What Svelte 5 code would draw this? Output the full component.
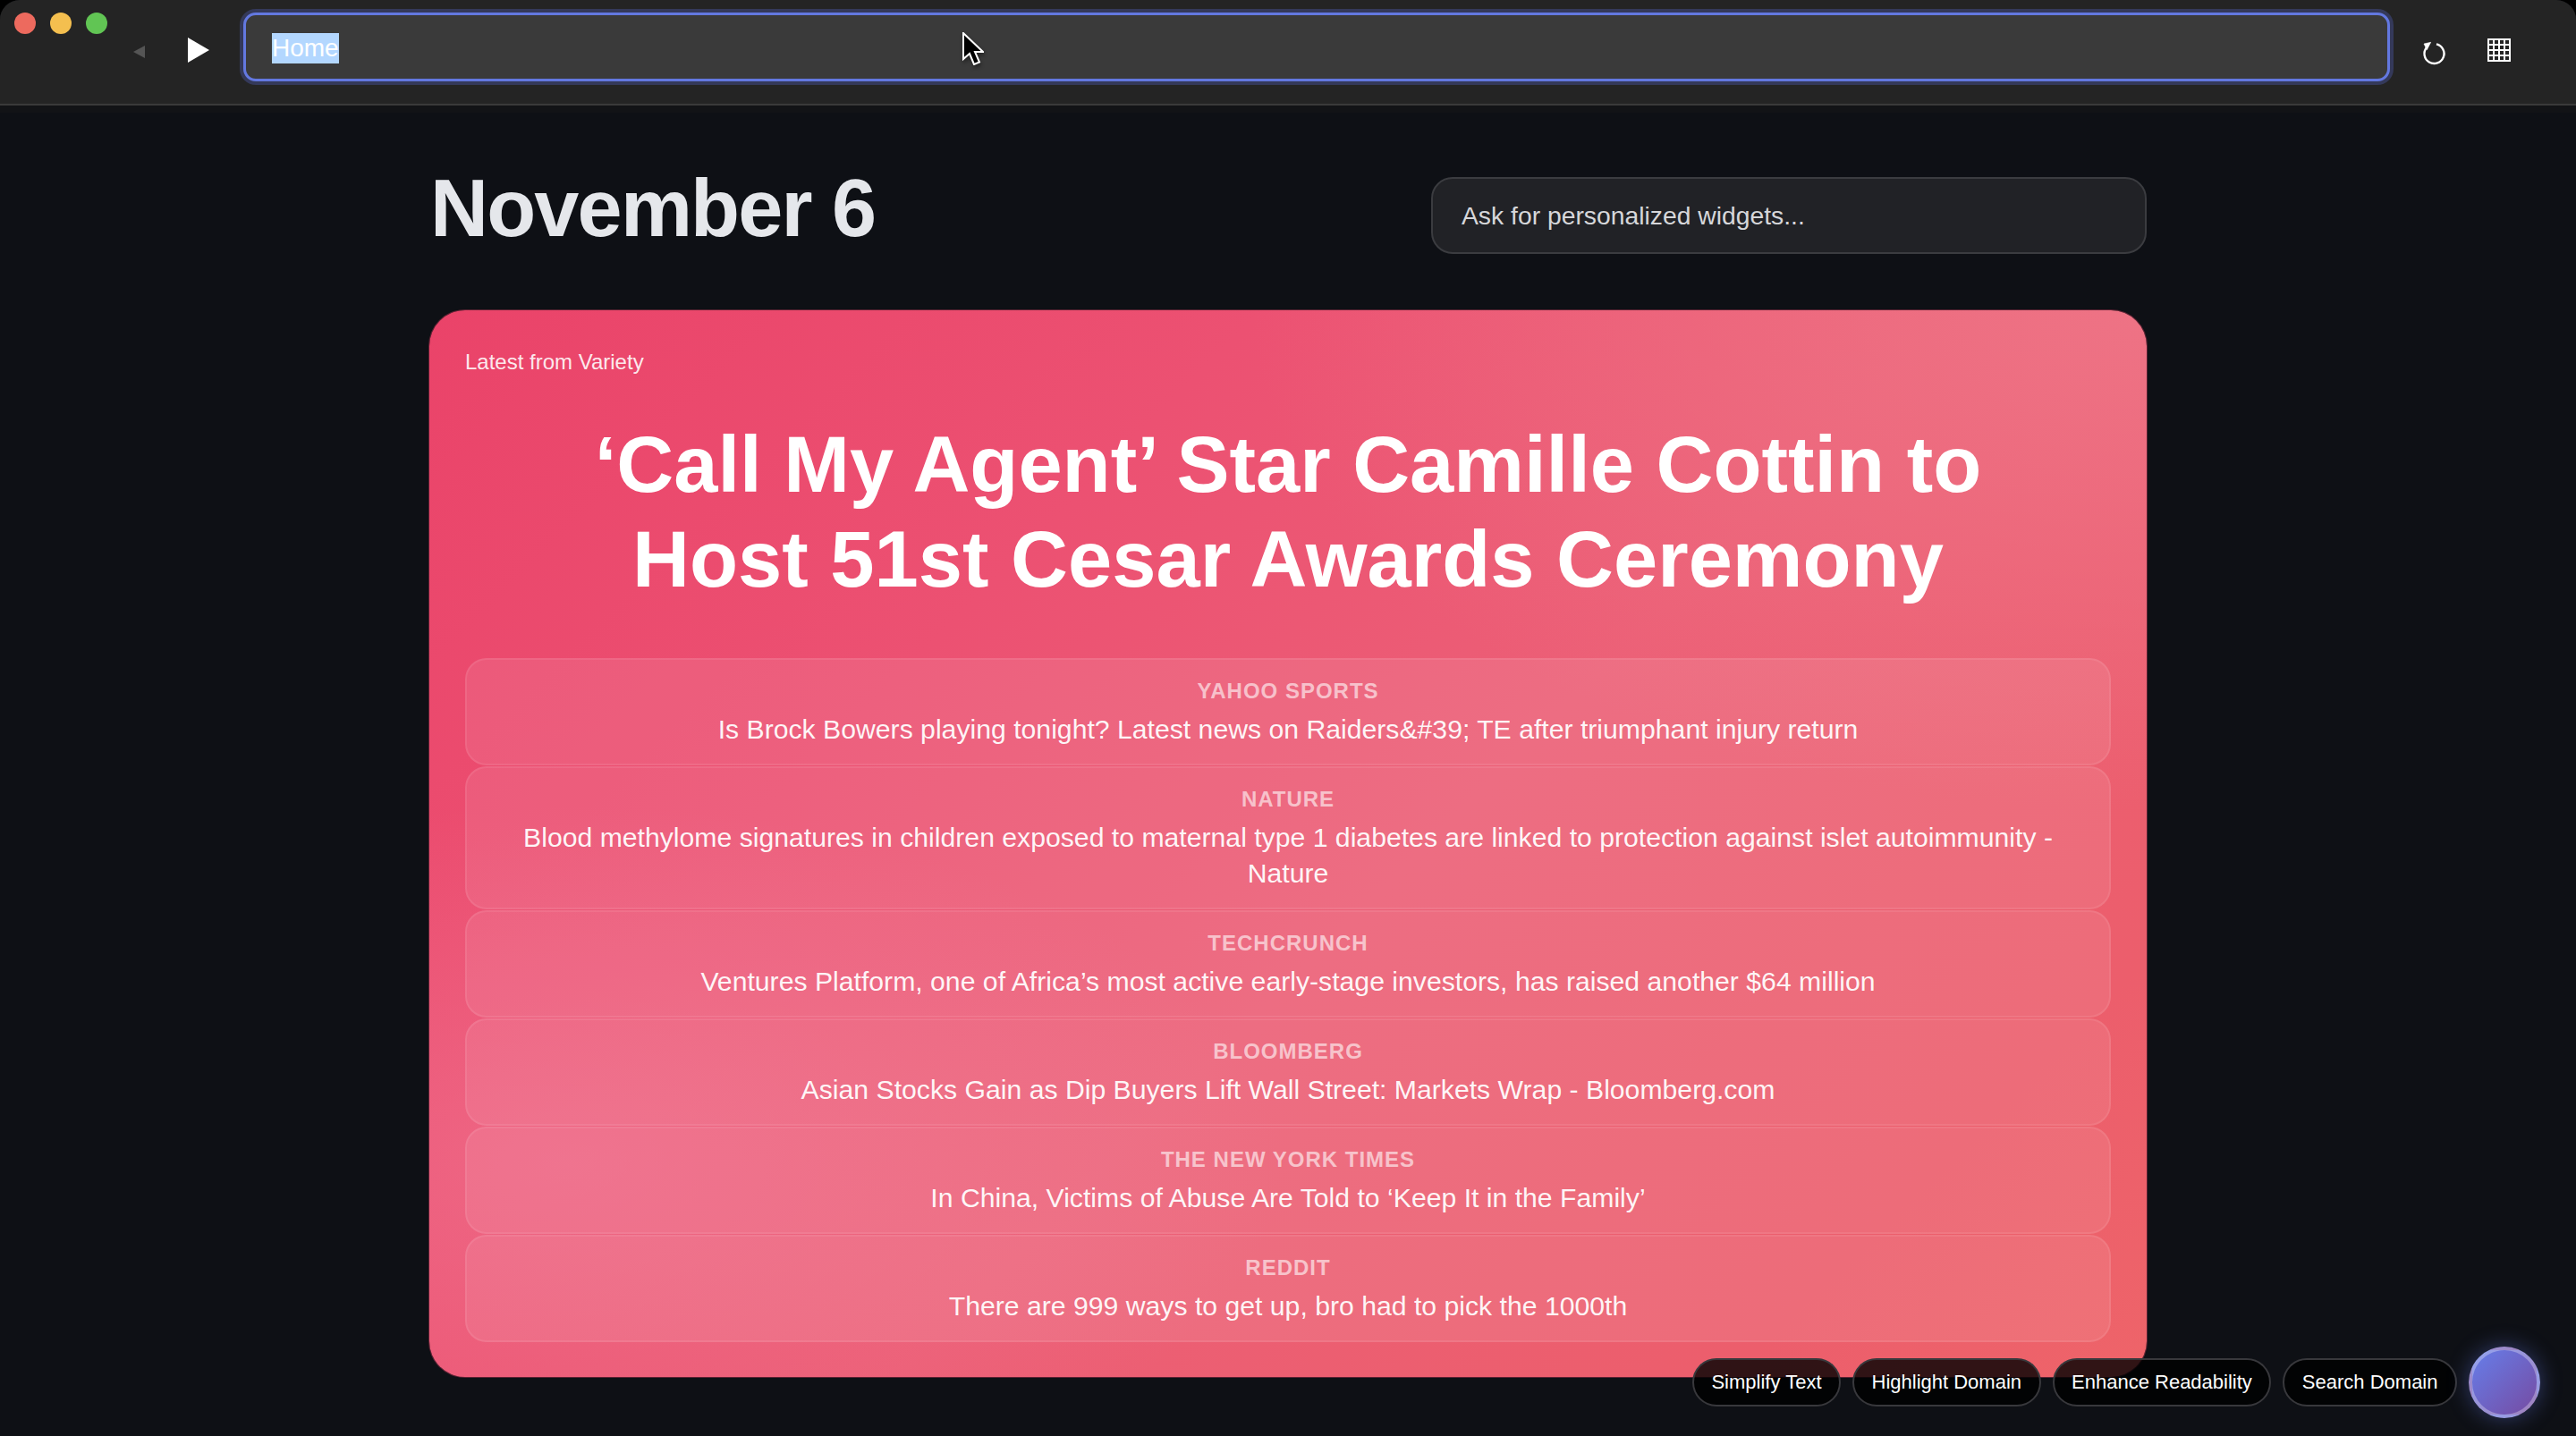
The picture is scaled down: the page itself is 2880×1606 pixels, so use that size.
<script>
  const stories = [
    { source: 'Yahoo Sports', title: 'Is Brock Bowers playing tonight? Latest news on Raiders&#39; TE after triumphant injury return' },
    { source: 'Nature', title: 'Blood methylome signatures in children exposed to maternal type 1 diabetes are linked to protection against islet autoimmunity - Nature' },
    { source: 'TechCrunch', title: 'Ventures Platform, one of Africa’s most active early-stage investors, has raised another $64 million' },
    { source: 'Bloomberg', title: 'Asian Stocks Gain as Dip Buyers Lift Wall Street: Markets Wrap - Bloomberg.com' },
    { source: 'The New York Times', title: 'In China, Victims of Abuse Are Told to ‘Keep It in the Family’' },
    { source: 'Reddit', title: 'There are 999 ways to get up, bro had to pick the 1000th' }
  ];
  const chips = ['Simplify Text', 'Highlight Domain', 'Enhance Readability', 'Search Domain'];
</script>

<div class="window">
  <header class="toolbar">
    <div class="lights">
      <span class="red"></span>
      <span class="yellow"></span>
      <span class="green"></span>
    </div>
    <div class="back"></div>
    <div class="play"></div>
    <div class="address">
      <span class="selected">Home</span>
    </div>
    <svg class="reload" viewBox="0 0 40 40" width="40" height="40">
      <path d="M24 14.300 A11 11 0 1 1 13 18" fill="none" stroke="#fff" stroke-width="2.400" />
      <path d="M17.700 12.300 L10 14 L13.300 20.700 Z" fill="#fff" stroke="#fff" stroke-width="0.600" />
    </svg>
    <svg class="grid" viewBox="0 0 26 26" width="26" height="26">
      <path fill="#fff" fill-rule="evenodd" d="M0 0H26V26H0Z M2 2V6H6V2Z M8 2V6H12V2Z M14 2V6H18V2Z M20 2V6H24V2Z M2 8V12H6V8Z M8 8V12H12V8Z M14 8V12H18V8Z M20 8V12H24V8Z M2 14V18H6V14Z M8 14V18H12V14Z M14 14V18H18V14Z M20 14V18H24V14Z M2 20V24H6V20Z M8 20V24H12V20Z M14 20V24H18V20Z M20 20V24H24V20Z" />
    </svg>
  </header>

  <main>
    <div class="top">
      <h1>November 6</h1>
      <div class="ask">Ask for personalized widgets...</div>
    </div>

    <section class="card">
      <p class="kicker">Latest from Variety</p>
      <h2>‘Call My Agent’ Star Camille Cottin to<br />Host 51st Cesar Awards Ceremony</h2>
      <div class="list">
        {#each stories as story}
          <article>
            <div class="source">{story.source}</div>
            <div class="headline">{story.title}</div>
          </article>
        {/each}
      </div>
    </section>
  </main>

  <div class="actions">
    {#each chips as chip}
      <button>{chip}</button>
    {/each}
    <div class="orb"></div>
  </div>

  <svg class="cursor" viewBox="0 0 24 37" width="24" height="37">
    <path d="M1 1 L1 30 L8 24 L13 36 L19 33.500 L14 22 L23 22 Z" fill="#000" stroke="#fff" stroke-width="2" />
  </svg>
</div>

<style>
  :global(body) {
    margin: 0;
    background: #000;
  }

  .window {
    position: relative;
    width: 2880px;
    height: 1606px;
    overflow: hidden;
    background: #0e1015;
    border-radius: 22px 22px 0 0;
    font-family: "Liberation Sans", Arial, sans-serif;
    color: #fff;
  }

  .toolbar {
    height: 116px;
    display: flex;
    align-items: flex-start;
    background: #242424;
    border-bottom: 2px solid #3a3a3a;
    box-shadow: 0 8px 0 #121316;
  }

  .lights {
    display: flex;
    gap: 16px;
    margin: 14px 0 0 16px;
  }

  .lights span {
    width: 24px;
    height: 24px;
    border-radius: 50%;
  }

  .red { background: #ed6a5e; }
  .yellow { background: #f4bf4f; }
  .green { background: #61c554; }

  .back {
    margin: 51px 0 0 29px;
    width: 0;
    height: 0;
    border-style: solid;
    border-width: 7px 13px 7px 0;
    border-color: transparent #555 transparent transparent;
  }

  .play {
    margin: 42px 0 0 48px;
    width: 0;
    height: 0;
    border-style: solid;
    border-width: 14px 0 14px 24px;
    border-color: transparent transparent transparent #fff;
  }

  .address {
    margin: 14px 0 0 38px;
    width: 2400px;
    height: 77px;
    box-sizing: border-box;
    display: flex;
    align-items: center;
    padding: 2px 0 0 29px;
    background: #3a3a3a;
    border: 3px solid #6378e0;
    border-radius: 14px;
    box-shadow: 0 0 0 4px #34395a;
    font-size: 28px;
  }

  .selected {
    background: #b3d7ff;
    line-height: 34px;
    color: #fff;
  }

  .reload {
    margin: 35px 0 0 28px;
  }

  .grid {
    margin: 43px 0 0 41px;
  }

  main {
    width: 1920px;
    margin: 0 auto;
  }

  .top {
    display: flex;
    justify-content: space-between;
    align-items: flex-start;
    height: 229px;
  }

  h1 {
    margin: 62px 0 0 1px;
    font-size: 90px;
    line-height: 106px;
    letter-spacing: -1.8px;
    font-weight: 700;
    color: #e5e7eb;
  }

  .ask {
    margin-top: 80px;
    width: 800px;
    height: 86px;
    box-sizing: border-box;
    display: flex;
    align-items: center;
    padding: 0 32px;
    background: #212226;
    border: 2px solid #3b3c40;
    border-radius: 24px;
    font-size: 28.300px;
    color: #d6d7da;
  }

  .card {
    height: 1193px;
    box-sizing: border-box;
    padding: 40px;
    border-radius: 40px;
    background:
      radial-gradient(ellipse 1000px 560px at 100% 0%, #ee7385 0%, rgba(238, 115, 133, 0) 100%),
      radial-gradient(ellipse 800px 400px at 8% 80%, rgba(240, 118, 146, 0.55) 0%, rgba(240, 118, 146, 0) 100%),
      linear-gradient(135deg, #ea4369 0%, #ec5172 30%, #ec5f76 55%, #ec5e6c 85%, #ee6469 100%);
    box-shadow: 0 0 0 1px rgba(234, 67, 105, 0.35);
  }

  .kicker {
    margin: 1px 0 0;
    font-size: 24px;
    line-height: 34px;
    color: rgba(255, 255, 255, 0.9);
  }

  h2 {
    margin: 45px 0 0;
    text-align: center;
    font-size: 88.500px;
    line-height: 106px;
    font-weight: 700;
  }

  .list {
    margin-top: 57px;
    display: flex;
    flex-direction: column;
  }

  article {
    box-sizing: border-box;
    min-height: 120px;
    padding: 20px 40px 18px;
    margin-bottom: 1px;
    text-align: center;
    background: rgba(255, 255, 255, 0.09);
    border: 2px solid rgba(255, 255, 255, 0.08);
    border-radius: 24px;
  }

  .source {
    font-size: 24px;
    line-height: 30px;
    font-weight: 700;
    letter-spacing: 1px;
    text-transform: uppercase;
    color: rgba(255, 255, 255, 0.6);
  }

  .headline {
    margin-top: 8px;
    font-size: 30.200px;
    line-height: 40px;
    color: rgba(255, 255, 255, 0.95);
  }

  .actions {
    position: absolute;
    right: 40px;
    bottom: 20px;
    display: flex;
    align-items: center;
    gap: 13px;
  }

  button {
    height: 54px;
    padding: 0 19.500px;
    background: rgba(0, 0, 0, 0.8);
    border: 2px solid #38383c;
    border-radius: 27px;
    color: #fff;
    font-family: inherit;
    font-size: 22px;
  }

  .orb {
    width: 80px;
    height: 80px;
    box-sizing: border-box;
    border-radius: 50%;
    background: linear-gradient(135deg, #667eea, #764ba2);
    border: 4px solid rgba(255, 255, 255, 0.3);
    box-shadow: 0 0 24px rgba(102, 126, 234, 0.4);
  }

  .cursor {
    position: absolute;
    left: 1076px;
    top: 36px;
    filter: drop-shadow(1px 3px 2px rgba(0, 0, 0, 0.4));
  }
</style>
